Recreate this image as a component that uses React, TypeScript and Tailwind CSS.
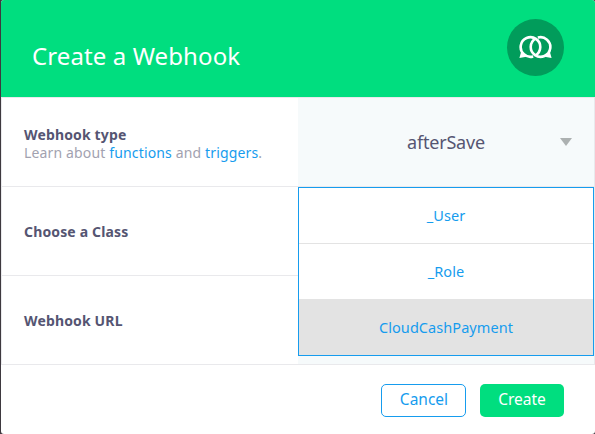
import React from 'react';

function WebhookIcon() {
  return (
    <svg width="33" height="25" viewBox="0.5 0 33 25" fill="none" stroke="#fff" strokeWidth="2.6">
      <path d="M14.7 21.4 A9.8 9.8 0 1 1 17 20.4" />
      <path d="M19.3 2.6 A9.8 9.8 0 1 1 17 3.6" />
      <path d="M2.6 17 L0.9 23 L8 21.8Z" fill="#fff" stroke="none" />
      <path d="M31.4 17 L33.1 23 L26 21.8Z" fill="#fff" stroke="none" />
    </svg>
  );
}

function Label({ title, children }: { title: string; children?: React.ReactNode }) {
  return (
    <div className={`flex w-[296px] shrink-0 flex-col justify-center pl-[22px] ${children ? 'pt-[3px]' : 'pt-[2px]'}`}>
      <div className="text-[14px] leading-[18px] font-bold tracking-[0.15px] text-[#555572]">{title}</div>
      {children}
    </div>
  );
}

const options = ['_User', '_Role', 'CloudCashPayment'];

export default function App() {
  return (
    <div className="h-[434px] w-[595px] overflow-hidden bg-[#3e393f] pl-px font-['Noto_Sans',sans-serif]">
      <div className="flex h-full flex-col overflow-hidden rounded-[3px] bg-white">
        <header className="flex h-[97px] shrink-0 items-start justify-between bg-[#00de7f] pr-[31px] pl-[31px]">
          <h1 className="pt-[40px] text-[24px] leading-[32px] tracking-[0.1px] text-white">Create a Webhook</h1>
          <div className="mt-[19px] flex size-[57px] items-center justify-center rounded-full bg-[#019c5b]">
            <WebhookIcon />
          </div>
        </header>
        <main className="shrink-0 border-x border-t border-[#e9e9ec]">
          <section className="flex h-[89px] border-b border-[#e9e9ec]">
            <Label title="Webhook type">
              <div className="text-[14px] leading-[18px] tracking-[0.15px] text-[#a2a2b0]">
                Learn about <span className="text-[#169cee]">functions</span> and <span className="text-[#169cee]">triggers</span>.
              </div>
            </Label>
            <div className="relative flex flex-1 items-center justify-center bg-[#f6fafb] text-[18px] tracking-[-0.2px] text-[#555572]">
              afterSave
              <svg className="absolute top-[40px] right-[22px]" width="12" height="8" viewBox="0 0 12 8">
                <path d="M0 0H12L6 8Z" fill="#acb1b1" />
              </svg>
            </div>
          </section>
          <section className="flex h-[89px] border-b border-[#e9e9ec]">
            <Label title="Choose a Class" />
            <div className="relative flex-1 bg-[#f6fafb]">
              <div className="absolute inset-x-0 top-0 z-10 h-[169px] border border-[#169cee] bg-white">
                {options.map((name, i) => (
                  <div
                    key={name}
                    className={`flex items-center justify-center text-[14.5px] tracking-[0.06px] text-[#169cee] ${
                      i === 2 ? 'h-[55px] bg-[#e3e3e3]' : 'h-[56px] border-b border-[#e3e3e3]'
                    }`}
                  >
                    {name}
                  </div>
                ))}
              </div>
            </div>
          </section>
          <section className="flex h-[89px] border-b border-[#e9e9ec]">
            <Label title="Webhook URL" />
            <div className="flex-1 bg-[#f6fafb]" />
          </section>
        </main>
        <footer className="flex flex-1 items-start justify-end gap-[14px] pt-[19px] pr-[31px] text-[15.5px]">
          <button className="flex h-[33px] w-[85px] items-center justify-center rounded-[5px] border border-[#169cee] pb-px pl-px text-[#169cee]">Cancel</button>
          <button className="flex h-[33px] w-[84px] items-center justify-center rounded-[5px] bg-[#00de7f] pb-px text-white">Create</button>
        </footer>
      </div>
    </div>
  );
}
